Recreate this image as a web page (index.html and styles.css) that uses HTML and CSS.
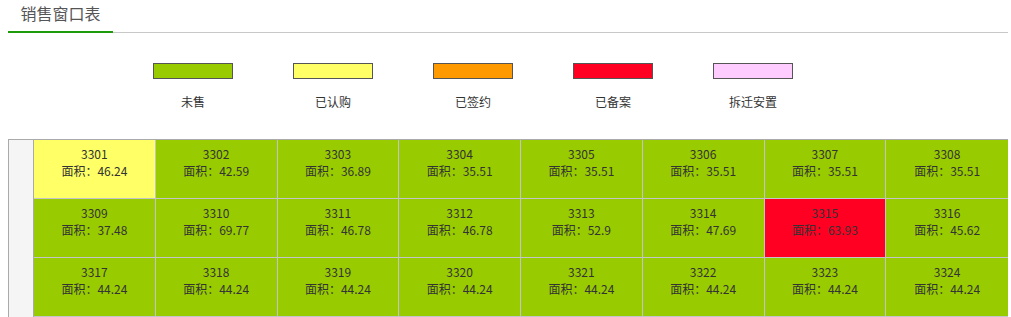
FILE: index.html
```html
<!DOCTYPE html>
<html lang="zh">
<head>
<meta charset="utf-8">
<title>销售窗口表</title>
<link rel="stylesheet" href="styles.css">
</head>
<body>
<div class="page">
  <div class="tabs">
    <div class="tab active">销售窗口表</div>
  </div>

  <div class="legend">
    <div class="legend-item"><span class="swatch s-unsold"></span><span class="legend-label">未售</span></div>
    <div class="legend-item"><span class="swatch s-sub"></span><span class="legend-label">已认购</span></div>
    <div class="legend-item"><span class="swatch s-signed"></span><span class="legend-label">已签约</span></div>
    <div class="legend-item"><span class="swatch s-filed"></span><span class="legend-label">已备案</span></div>
    <div class="legend-item"><span class="swatch s-reloc"></span><span class="legend-label">拆迁安置</span></div>
  </div>

  <div class="board">
    <div class="floor-col"></div>
    <div class="cells">
      <div class="cell sub"><div>3301</div><div>面积：46.24</div></div>
      <div class="cell"><div>3302</div><div>面积：42.59</div></div>
      <div class="cell"><div>3303</div><div>面积：36.89</div></div>
      <div class="cell"><div>3304</div><div>面积：35.51</div></div>
      <div class="cell"><div>3305</div><div>面积：35.51</div></div>
      <div class="cell"><div>3306</div><div>面积：35.51</div></div>
      <div class="cell"><div>3307</div><div>面积：35.51</div></div>
      <div class="cell last"><div>3308</div><div>面积：35.51</div></div>

      <div class="cell"><div>3309</div><div>面积：37.48</div></div>
      <div class="cell"><div>3310</div><div>面积：69.77</div></div>
      <div class="cell"><div>3311</div><div>面积：46.78</div></div>
      <div class="cell"><div>3312</div><div>面积：46.78</div></div>
      <div class="cell"><div>3313</div><div>面积：52.9</div></div>
      <div class="cell"><div>3314</div><div>面积：47.69</div></div>
      <div class="cell filed"><div>3315</div><div>面积：63.93</div></div>
      <div class="cell last"><div>3316</div><div>面积：45.62</div></div>

      <div class="cell"><div>3317</div><div>面积：44.24</div></div>
      <div class="cell"><div>3318</div><div>面积：44.24</div></div>
      <div class="cell"><div>3319</div><div>面积：44.24</div></div>
      <div class="cell"><div>3320</div><div>面积：44.24</div></div>
      <div class="cell"><div>3321</div><div>面积：44.24</div></div>
      <div class="cell"><div>3322</div><div>面积：44.24</div></div>
      <div class="cell"><div>3323</div><div>面积：44.24</div></div>
      <div class="cell last"><div>3324</div><div>面积：44.24</div></div>
    </div>
  </div>
</div>
</body>
</html>
```

FILE: styles.css
```css
* { box-sizing: border-box; }

html, body {
  margin: 0;
  padding: 0;
  background: #fff;
  overflow: hidden;
}

body {
  font-family: "Microsoft YaHei", "Noto Sans CJK SC", "Noto Sans", sans-serif;
  color: #333;
}

.page {
  width: 1011px;
  padding: 0 3px 0 8px;
}

.tabs {
  display: flex;
  border-bottom: 1px solid #c8c8c8;
  height: 33px;
}

.tab {
  width: 105px;
  text-align: center;
  font-size: 16px;
  line-height: 24px;
  padding-top: 1px;
  color: #555;
}

.tab.active {
  border-bottom: 2px solid #1f9a0a;
  height: 33px;
  margin-bottom: -1px;
}

.legend {
  display: flex;
  padding-left: 115px;
  margin-top: 30px;
}

.legend-item {
  width: 140px;
  display: flex;
  flex-direction: column;
  align-items: center;
}

.swatch {
  display: block;
  width: 80px;
  height: 16px;
  border: 1px solid #555;
}

.s-unsold { background: #99cc00; }
.s-sub { background: #ffff66; }
.s-signed { background: #ff9900; }
.s-filed { background: #ff0022; }
.s-reloc { background: #ffccff; }

.legend-label {
  margin-top: 14px;
  font-size: 12px;
  line-height: 17px;
}

.board {
  display: flex;
  margin-top: 29px;
  border: 1px solid #aaa;
  border-right: none;
  height: 190px;
}

.floor-col {
  width: 25px;
  flex: none;
  background: #f5f5f5;
  border-right: 1px solid #aaa;
}

.cells {
  flex: 1;
  display: grid;
  grid-template-columns: repeat(8, 1fr);
  grid-auto-rows: 59px;
  background: #99cc00;
}

.cell {
  background: #99cc00;
  border-right: 1px solid #c4c4cc;
  border-bottom: 1px solid #c4c4cc;
  text-align: center;
  font-size: 12px;
  line-height: 17px;
  padding-top: 5px;
  color: #333;
}

.cell.last { border-right: none; }
.cell.sub { background: #ffff66; }
.cell.filed { background: #ff0022; }
```
